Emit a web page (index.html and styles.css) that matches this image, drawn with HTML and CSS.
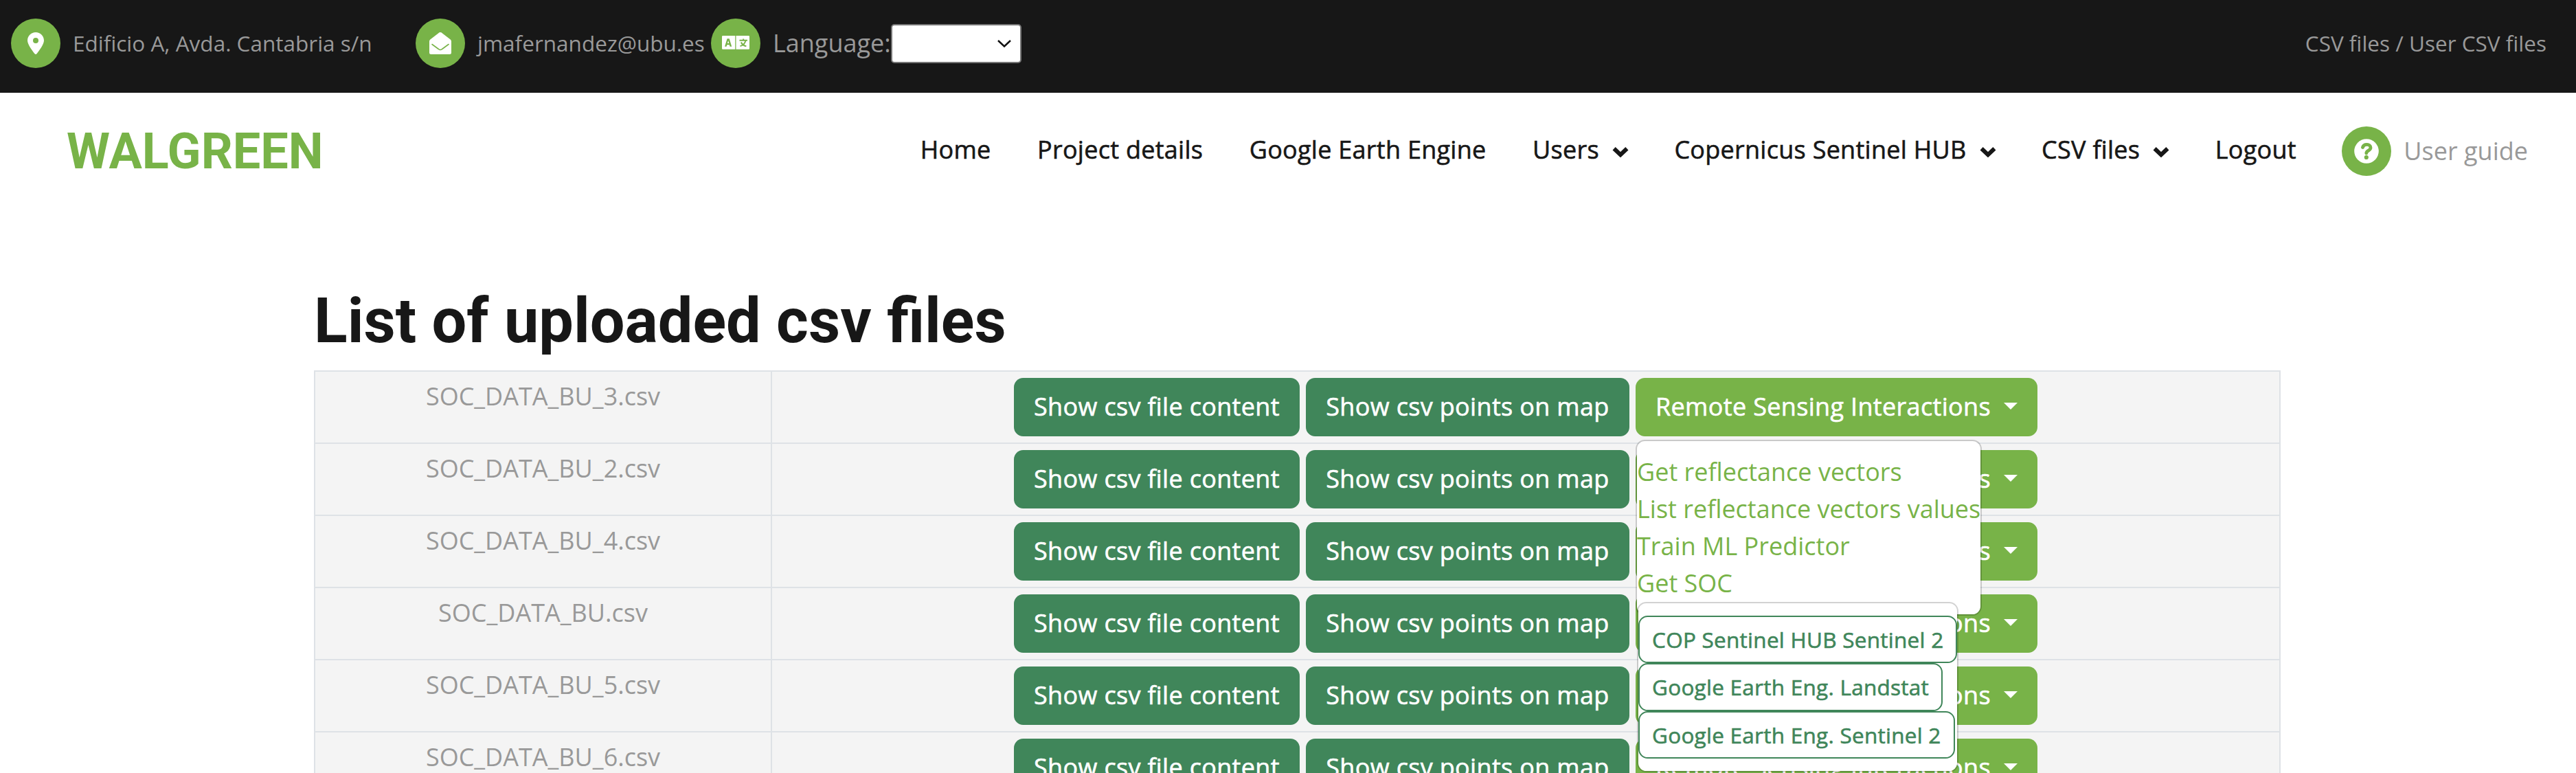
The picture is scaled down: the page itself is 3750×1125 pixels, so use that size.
FILE: index.html
```html
<!DOCTYPE html>
<html lang="en">
<head>
<meta charset="utf-8">
<title>User CSV files</title>
<link rel="stylesheet" href="styles.css">
</head>
<body>
<header class="topbar">
  <div class="contact">
    <span class="badge"><svg class="pin" viewBox="0 0 384 512"><path d="M215.700 499.200C267 435 384 279.400 384 192C384 86 298 0 192 0S0 86 0 192c0 87.400 117 243 168.300 307.200c12.300 15.300 35.100 15.300 47.400 0zM192 128a64 64 0 1 1 0 128 64 64 0 1 1 0-128z"/></svg></span>
    <span class="small address">Edificio A, Avda. Cantabria s/n</span>
    <span class="badge"><svg class="mail" viewBox="0 0 32 32"><path d="M0 29.500V13.200q0-1.700 1.300-2.700L13 1.400q3-2.600 6 0l11.700 9.100q1.300 1 1.300 2.700v16.300q0 2.500-2.500 2.500h-27Q0 32 0 29.500z"/><path class="flap" d="M4 17.500l9.500 7q2.500 2 5 0l9.500-7"/></svg></span>
    <span class="small email">jmafernandez@ubu.es</span>
    <span class="badge"><svg class="lang" viewBox="0 0 640 512"><path d="M20 80h288v316H20a20 20 0 0 1-20-20V100a20 20 0 0 1 20-20zM328 80h292a20 20 0 0 1 20 20v276a20 20 0 0 1-20 20H328z"/><path class="cut" fill-rule="evenodd" d="M121 146h50l56 186h-42l-12-42h-56l-12 42H65zM146 190l-19 66h38z"/><path class="glyph" d="M408 186h184M499 150v36M552 190C538 256 492 304 424 322M446 232C464 276 508 312 566 324"/></svg></span>
    <span class="lang-label">Language:</span>
    <span class="select"><svg viewBox="0 0 20 11"><path d="M1 1l9 8.500L19 1"/></svg></span>
  </div>
  <span class="small">CSV files / User CSV files</span>
</header>
<div class="navbar">
  <a class="brand">WALGREEN</a>
  <nav class="menu">
    <a>Home</a>
    <a>Project details</a>
    <a>Google Earth Engine</a>
    <a>Users<svg class="chev" viewBox="0 0 23 15"><path d="M2.500 3l9 8.500L20.500 3"/></svg></a>
    <a>Copernicus Sentinel HUB<svg class="chev" viewBox="0 0 23 15"><path d="M2.500 3l9 8.500L20.500 3"/></svg></a>
    <a>CSV files<svg class="chev" viewBox="0 0 23 15"><path d="M2.500 3l9 8.500L20.500 3"/></svg></a>
    <a>Logout</a>
  </nav>
  <div class="guide">
    <span class="badge"><svg class="help" viewBox="0 0 36 36"><circle cx="18" cy="18" r="17.800"/><path class="mark" d="M12.500 12.500C14 7 24 7 24 13c0 4.200-6.200 4-6.200 8"/><circle class="cut" cx="17.800" cy="27" r="3.100"/></svg></span>
    <span>User guide</span>
  </div>
</div>
<main class="content">
  <h1>List of uploaded csv files</h1>
  <div class="files">
    <div class="row"><div class="name">SOC_DATA_BU_3.csv</div><div class="actions"><a class="btn">Show csv file content</a><a class="btn">Show csv points on map</a><div class="dropdown"><a class="btn toggle">Remote Sensing Interactions</a>
      <div class="popup main-popup">
        <a>Get reflectance vectors</a><a>List reflectance vectors values</a><a>Train ML Predictor</a><a>Get SOC</a>
        <div class="popup sub-popup"><a class="outline">COP Sentinel HUB Sentinel 2</a><a class="outline">Google Earth Eng. Landstat</a><a class="outline">Google Earth Eng. Sentinel 2</a></div>
      </div></div></div></div>
    <div class="row"><div class="name">SOC_DATA_BU_2.csv</div><div class="actions"><a class="btn">Show csv file content</a><a class="btn">Show csv points on map</a><a class="btn toggle">Remote Sensing Interactions</a></div></div>
    <div class="row"><div class="name">SOC_DATA_BU_4.csv</div><div class="actions"><a class="btn">Show csv file content</a><a class="btn">Show csv points on map</a><a class="btn toggle">Remote Sensing Interactions</a></div></div>
    <div class="row"><div class="name">SOC_DATA_BU.csv</div><div class="actions"><a class="btn">Show csv file content</a><a class="btn">Show csv points on map</a><a class="btn toggle">Remote Sensing Interactions</a></div></div>
    <div class="row"><div class="name">SOC_DATA_BU_5.csv</div><div class="actions"><a class="btn">Show csv file content</a><a class="btn">Show csv points on map</a><a class="btn toggle">Remote Sensing Interactions</a></div></div>
    <div class="row"><div class="name">SOC_DATA_BU_6.csv</div><div class="actions"><a class="btn">Show csv file content</a><a class="btn">Show csv points on map</a><a class="btn toggle">Remote Sensing Interactions</a></div></div>
  </div>
</main>
</body>
</html>
```
FILE: styles.css
```css
* { box-sizing: border-box; }
html, body { margin: 0; height: 1125px; overflow: hidden; }
body {
  background: #fff;
  color: #999;
  font: 400 36px/54px "Open Sans", "Noto Sans", sans-serif;
}
a { white-space: nowrap; }
.topbar {
  display: flex;
  justify-content: space-between;
  height: 135px;
  padding: 27px 43px 36px 16px;
  background: #171717;
}
.contact { display: flex; align-items: center; }
.topbar > .small { line-height: 72px; }
.small { font-size: 31.5px; white-space: nowrap; }
.badge {
  display: flex;
  align-items: center;
  justify-content: center;
  width: 72px;
  height: 72px;
  border-radius: 50%;
  background: #78b348;
  flex: none;
}
.badge svg { fill: #fff; display: block; }
.badge .cut { fill: #78b348; }
.pin { width: 24px; height: 32px; }
.mail { width: 32px; height: 32px; }
.badge .flap { fill: none; stroke: #78b348; stroke-width: 1.600; stroke-linecap: round; }
.lang { width: 40px; height: 32px; }
.badge .glyph { fill: none; stroke: #78b348; stroke-width: 32; }
.help { width: 36px; height: 36px; }
.badge .mark { fill: none; stroke: #78b348; stroke-width: 4.800; stroke-linecap: round; }
.address { width: 499px; margin-left: 18px; }
.email { width: 340px; margin-left: 18px; }
.lang-label { width: 172px; margin-left: 18px; }
.select {
  display: flex;
  align-items: center;
  justify-content: flex-end;
  width: 190px;
  height: 57px;
  padding-right: 13px;
  border: 2px solid #767676;
  border-radius: 5px;
  background: #fff;
}
.select svg { width: 20px; height: 11px; fill: none; stroke: #111; stroke-width: 2.500; }
.navbar {
  display: flex;
  align-items: center;
  height: 170px;
  padding: 0 70px 0 97px;
}
.brand { padding-top: 2px; color: #78b348; font: 700 72px/86px Roboto, sans-serif; }
/* medium weight: slightly heavier and wider than regular */
.menu, .btn, .outline {
  font-feature-settings: "liga" 1;
  -webkit-text-stroke: .6px currentColor;
}
.menu {
  display: flex;
  gap: 67.500px;
  margin: 0 0 4px auto;
  color: #171717;
  letter-spacing: .270px;
}
.menu a { display: flex; align-items: center; }
.chev {
  width: 24px;
  height: 16px;
  margin: 6px -1px 0 19px;
  fill: none;
  stroke: #171717;
  stroke-width: 5.800;
}
.guide { display: flex; align-items: center; gap: 18px; margin-left: 66.500px; }
.content { width: 2863px; margin-left: 457px; padding-top: 109px; }
h1 {
  margin: 0 0 17px;
  color: #171717;
  font: 700 90px/108px Roboto, sans-serif;
}
.files { border: solid #dee2e6; border-width: 2px 2px 0; background: #f4f4f4; }
.row { display: flex; height: 105px; border-bottom: 2px solid #dee2e6; }
.name { width: 663px; padding-top: 9px; text-align: center; }
.actions {
  display: flex;
  flex: 1;
  justify-content: center;
  gap: 9.400px;
  padding: 9px 0;
  border-left: 2px solid #dee2e6;
}
.btn {
  display: flex;
  align-items: center;
  height: 85px;
  padding: 0 29px 1px;
  border-radius: 13.500px;
  background: #40865a;
  color: #fff;
  letter-spacing: .330px;
}
.toggle { background: #78b348; }
.toggle::after {
  content: "";
  margin: -2px 0 0 19px;
  border: solid transparent;
  border-width: 10px 10px 0;
  border-top-color: #fff;
}
.dropdown { position: relative; }
.popup {
  position: absolute;
  display: flex;
  flex-direction: column;
  align-items: flex-start;
  padding: 18px 0;
  border: 2px solid rgba(0, 0, 0, .175);
  border-radius: 13.500px;
  background: #fff;
  background-clip: padding-box;
}
.main-popup { z-index: 2; top: 90px; left: 0; width: 504px; color: #78b348; }
.sub-popup { top: 234px; left: 0; width: 468px; }
.outline {
  height: 69.250px;
  padding: 9px 18px;
  border: 2px solid #40865a;
  border-radius: 13.500px;
  color: #40865a;
  font-size: 31.5px;
  letter-spacing: .260px;
  line-height: 47.250px;
}
```
